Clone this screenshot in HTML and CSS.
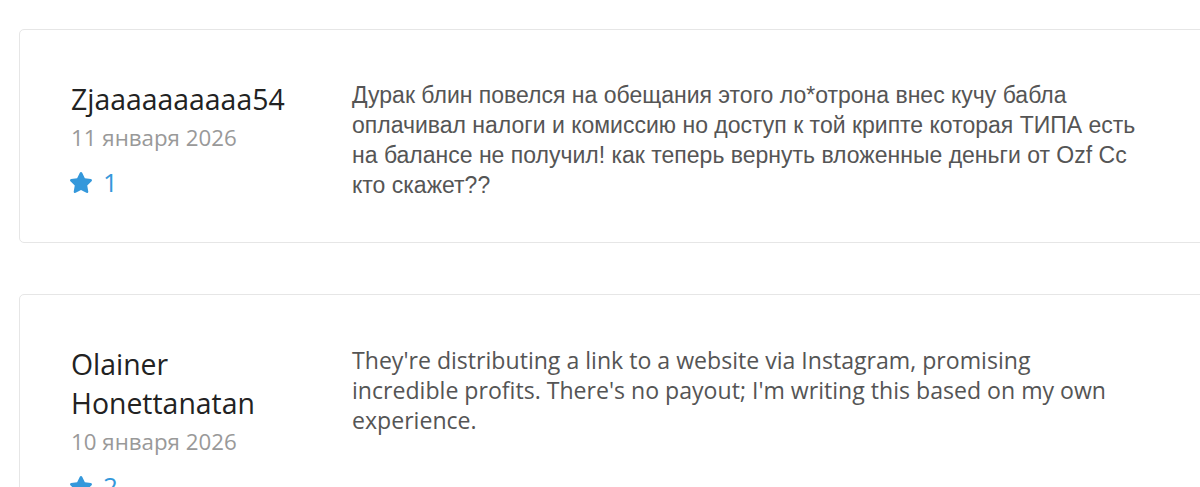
FILE: index.html
```html
<!DOCTYPE html>
<html lang="ru">
<head>
<meta charset="utf-8">
<title>Отзывы</title>
<link rel="stylesheet" href="styles.css">
</head>
<body>
<div class="reviews">
  <div class="review">
    <div class="author">
      <div class="name">Zjaaaaaaaaaa54</div>
      <div class="date">11 января 2026</div>
      <div class="rating">
        <svg class="star" viewBox="0 0 576 512" aria-hidden="true"><path d="M259.3 17.8L194 150.2 47.9 171.5c-26.2 3.8-36.7 36.1-17.7 54.6l105.7 103-25 145.5c-4.5 26.3 23.2 46 46.4 33.7L288 439.6l130.7 68.7c23.2 12.2 50.9-7.4 46.4-33.7l-25-145.5 105.7-103c19-18.5 8.5-50.8-17.7-54.6L382 150.2 316.7 17.8c-11.7-23.6-45.6-23.9-57.4 0z"/></svg>
        <span class="score">1</span>
      </div>
    </div>
    <div class="text text-ru">Дурак блин повелся на обещания этого ло*отрона внес кучу бабла оплачивал налоги и комиссию но доступ к той крипте которая ТИПА есть на балансе не получил! как теперь вернуть вложенные деньги от Ozf Cc кто скажет??</div>
  </div>
  <div class="review">
    <div class="author">
      <div class="name">Olainer Honettanatan</div>
      <div class="date">10 января 2026</div>
      <div class="rating">
        <svg class="star" viewBox="0 0 576 512" aria-hidden="true"><path d="M259.3 17.8L194 150.2 47.9 171.5c-26.2 3.8-36.7 36.1-17.7 54.6l105.7 103-25 145.5c-4.5 26.3 23.2 46 46.4 33.7L288 439.6l130.7 68.7c23.2 12.2 50.9-7.4 46.4-33.7l-25-145.5 105.7-103c19-18.5 8.5-50.8-17.7-54.6L382 150.2 316.7 17.8c-11.7-23.6-45.6-23.9-57.4 0z"/></svg>
        <span class="score">2</span>
      </div>
    </div>
    <div class="text">They're distributing a link to a website via Instagram, promising incredible profits. There's no payout; I'm writing this based on my own experience.</div>
  </div>
</div>
</body>
</html>
```
FILE: styles.css
```css
html, body {
  margin: 0;
  padding: 0;
  background: #ffffff;
  overflow: hidden;
}

body {
  font-family: "Open Sans", "Liberation Sans", sans-serif;
  color: #333333;
}

.reviews {
  padding: 29px 0 0 19px;
}

.review {
  display: flex;
  width: 1240px;
  box-sizing: border-box;
  border: 1px solid #e6e6e6;
  border-radius: 5px;
  padding: 50px 51px 42px 51px;
  margin-bottom: 51px;
}

.author {
  flex: 0 0 281px;
}

.name {
  font-size: 28.4px;
  line-height: 39px;
  color: #222222;
  width: 240px;
}

.date {
  margin-top: 4px;
  font-size: 22.3px;
  line-height: 30px;
  color: #999999;
}

.rating {
  display: flex;
  align-items: center;
  gap: 10px;
  margin-top: 14px;
  color: #3498db;
}

.star {
  width: 24px;
  height: 21px;
  margin-left: -2px;
  fill: #3498db;
}

.score {
  font-size: 26px;
  line-height: 30px;
}

.text {
  width: 787px;
  font-size: 23.1px;
  line-height: 30px;
  color: #555555;
}

.text-ru {
  font-family: "Liberation Sans", Arial, sans-serif;
  font-size: 23px;
}
```
